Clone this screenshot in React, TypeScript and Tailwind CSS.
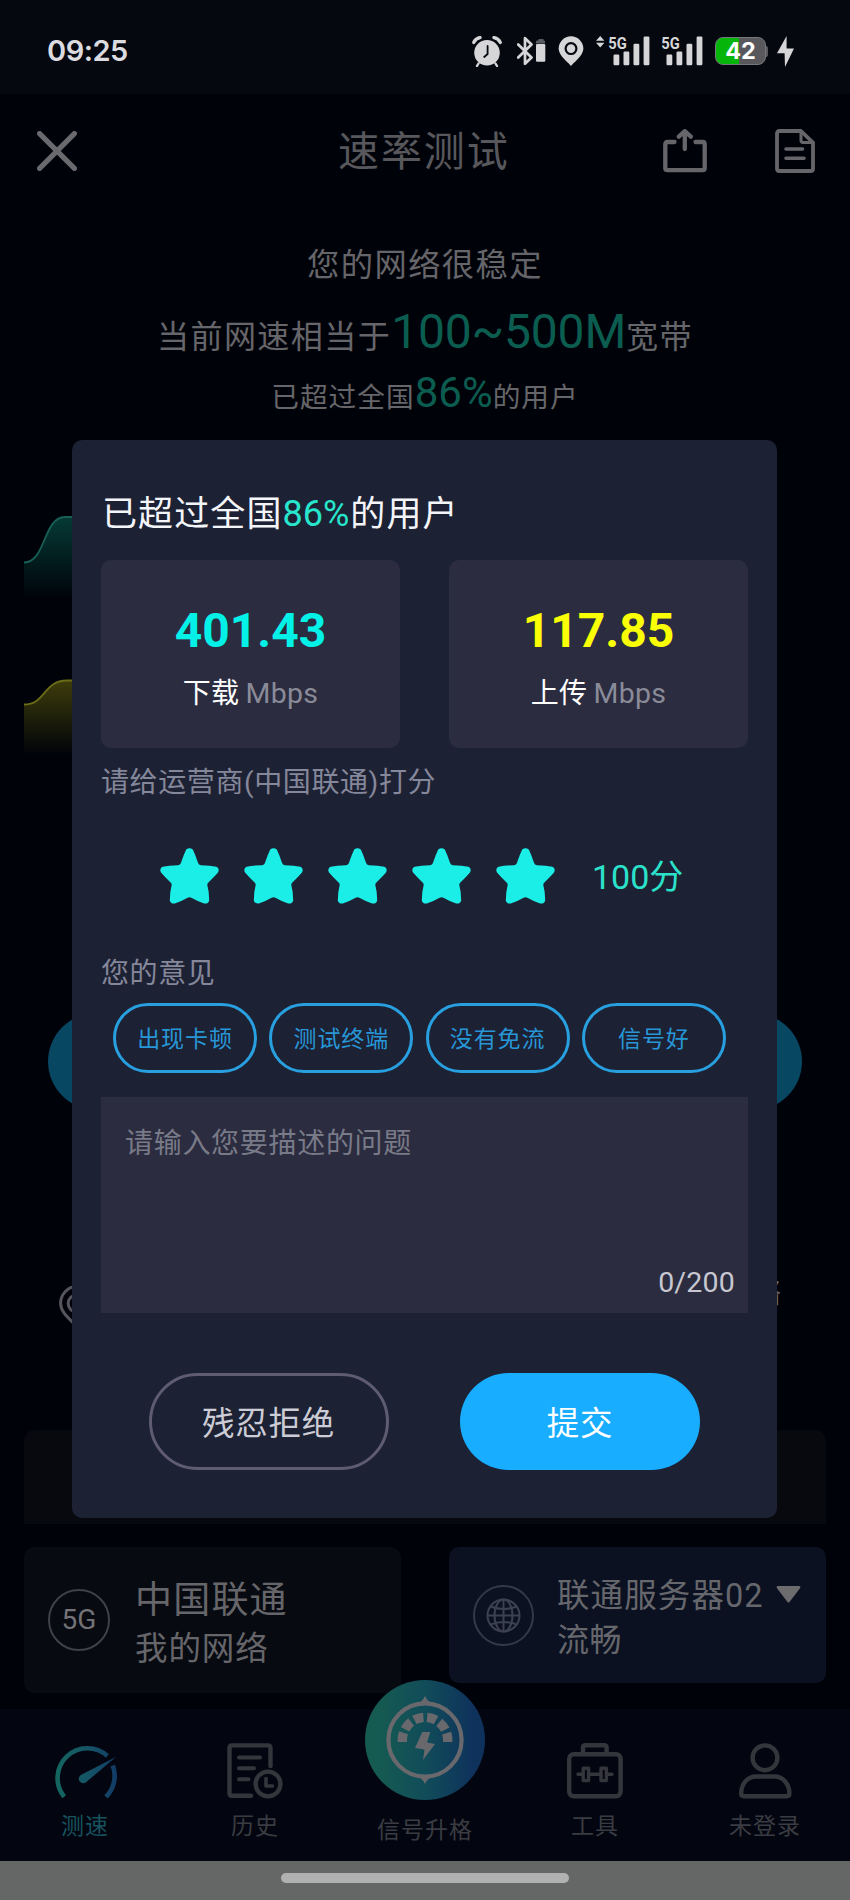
import type { ReactNode } from "react";

const chips = ["出现卡顿", "测试终端", "没有免流", "信号好"];

function AlarmIcon() {
  return (
    <svg className="h-[31px] w-[30px]" viewBox="0 0 30 31" fill="none">
      <circle cx="15" cy="16.8" r="12.8" fill="#d6d6d8" />
      <path d="M1.8 6.4C3 3.8 5 2.2 8 1.6M28.2 6.4C27 3.8 25 2.2 22 1.6" stroke="#d6d6d8" strokeWidth="3.4" strokeLinecap="round" />
      <path d="M6.5 27.5 5 30M23.5 27.5 25 30" stroke="#d6d6d8" strokeWidth="2.4" strokeLinecap="round" />
      <path d="M15.6 10v8l-3.4 3" stroke="#05080f" strokeWidth="1.8" strokeLinecap="round" />
    </svg>
  );
}

function BluetoothIcon() {
  return (
    <svg className="h-[30px] w-[29px]" viewBox="0 0 29 30" fill="none">
      <path d="M1.2 8.5 14.5 21.5 8 27.8V2.2L14.5 8.5 1.2 21.5" stroke="#d6d6d8" strokeWidth="2.7" strokeLinejoin="round" strokeLinecap="round" />
      <path d="M19 7.5V5.6a1 1 0 0 1 1-1h1.5V3h5v1.6H27a1 1 0 0 1 1 1v1.9z" fill="#5b5c62" />
      <rect x="19" y="8" width="9.3" height="17.8" rx="1.2" fill="#d6d6d8" />
    </svg>
  );
}

function PinStatusIcon() {
  return (
    <svg className="h-[30px] w-[26px]" viewBox="0 0 26 30" fill="none">
      <path d="M13 30C11 27 1 20.5 0.6 12.8A12.4 12.6 0 0 1 25.4 12.8C25 20.5 15 27 13 30Z" fill="#d6d6d8" />
      <circle cx="13" cy="12.6" r="5.4" stroke="#05080f" strokeWidth="2.2" />
    </svg>
  );
}

function SignalIcon({ arrows = false }: { arrows?: boolean }) {
  return (
    <svg className="h-[46px] w-[54px]" viewBox="0 -8 54 46" fill="#d6d6d8">
      {arrows && <path d="M0 4.7 4.2 0l4.2 4.7zM0 6.8l4.2 4.7 4.2-4.7z" />}
      <text x="12.2" y="12.6" fontSize="17" fontWeight="700" fontFamily="Roboto, sans-serif" textLength="18.5" lengthAdjust="spacingAndGlyphs">5G</text>
      <rect x="17.5" y="18.5" width="5.8" height="10.8" rx="1.2" />
      <rect x="27.5" y="15.5" width="5.8" height="13.8" rx="1.2" />
      <rect x="37.5" y="7.8" width="5.8" height="21.5" rx="1.2" />
      <rect x="47.6" y="0.6" width="5.8" height="28.7" rx="1.2" />
    </svg>
  );
}

function BatteryIcon() {
  return (
    <div className="flex items-center">
      <div className="flex h-7 w-[51px] items-center justify-center rounded-[8px] border border-[#77787b] bg-[linear-gradient(90deg,#06b50a_46%,#59595d_46%)] font-[Inter] text-[23.5px] leading-none font-bold text-white">
        42
      </div>
      <div className="h-[11px] w-[2px] rounded-r-full bg-[#59595d]" />
    </div>
  );
}

function CloseIcon() {
  return (
    <svg className="h-10 w-10" viewBox="0 0 40 40" stroke="#6a6a6e" strokeWidth="5.2" strokeLinecap="round">
      <path d="M2.6 2.6 37.4 37.4M37.4 2.6 2.6 37.4" />
    </svg>
  );
}

function ShareIcon() {
  return (
    <svg className="h-11 w-11" viewBox="0 0 44 44" fill="none" stroke="#66666a" strokeWidth="4.3" strokeLinecap="round" strokeLinejoin="round">
      <path d="M11.5 13H4.5Q2.3 13 2.3 15.2V39Q2.3 41.2 4.5 41.2H39.5Q41.7 41.2 41.7 39V15.2Q41.7 13 39.5 13H32.5" />
      <path d="M21.8 20V3.5M15.8 7.6 21.8 2.2 27.8 7.6" />
    </svg>
  );
}

function DocIcon() {
  return (
    <svg className="h-11 w-10" viewBox="0 0 40 44" fill="none" stroke="#66666a" strokeWidth="3.8" strokeLinecap="round" strokeLinejoin="round">
      <path d="M26 2H4.6Q2 2 2 4.6V39.4Q2 42 4.6 42H35.4Q38 42 38 39.4V13.6Z" />
      <path d="M26 2.5V11.5Q26 13.4 28 13.4H37" strokeWidth="3" />
      <path d="M11 20H27.5M11 29.2H29" strokeWidth="3.6" />
    </svg>
  );
}

function StarIcon() {
  return (
    <svg className="h-14 w-[59px]" viewBox="0 0 59 56" fill="#1beee6">
      <path d="M26.2 1.4Q29.5-1 32.8 1.4Q35.4 6.6 38 14.8Q38.6 17 41 17.2Q50 17.2 56.4 18.8Q60 20.4 58 24.6Q54 29.4 48.4 34.4Q47 35.6 47.4 37.6Q49.2 44 49.2 52.4Q48.4 56 44.2 55.4Q37 53.2 31.4 49.8Q29.5 48.8 27.6 49.8Q22 53.2 14.8 55.4Q10.6 56 9.8 52.4Q9.8 44 11.6 37.6Q12 35.6 10.6 34.4Q5 29.4 1 24.6Q-1 20.4 2.6 18.8Q9 17.2 18 17.2Q20.4 17 21 14.8Q23.6 6.6 26.2 1.4Z" />
    </svg>
  );
}

function GlobeIcon() {
  return (
    <svg className="h-[35px] w-[35px]" viewBox="0 0 35 35" fill="none" stroke="#3c4150" strokeWidth="2">
      <circle cx="17.5" cy="17.5" r="16" />
      <ellipse cx="17.5" cy="17.5" rx="9" ry="16" />
      <path d="M17.5 1.5v32M1.5 17.5h32M4.5 8.5Q17.5 13.5 30.5 8.5M4.5 26.5Q17.5 21.5 30.5 26.5" />
    </svg>
  );
}

function GaugeIcon() {
  return (
    <svg className="h-14 w-[66px]" viewBox="0 0 66 56" fill="none">
      <defs>
        <linearGradient id="gauge" x1="0" y1="0" x2="66" y2="0" gradientUnits="userSpaceOnUse">
          <stop offset="0" stopColor="#14685f" />
          <stop offset="0.55" stopColor="#155466" />
          <stop offset="1" stopColor="#123a66" />
        </linearGradient>
      </defs>
      <path d="M12.2 53.8A29.8 29.8 0 0 1 55.4 13M60.8 22.5A29.8 29.8 0 0 1 54 53.8" stroke="url(#gauge)" strokeWidth="4.6" />
      <path d="M64.2 13.8 29.8 31.4A4.6 4.6 0 1 0 35.2 38.3Z" fill="url(#gauge)" />
    </svg>
  );
}

function HistoryIcon() {
  return (
    <svg className="h-14 w-14" viewBox="0 0 56 56" fill="none" stroke="#34363c" strokeWidth="4.4" strokeLinecap="round" strokeLinejoin="round">
      <path d="M43.5 23V5Q43.5 2.4 41 2.4H5Q2.5 2.4 2.5 5V50Q2.5 52.8 5 52.8H24" />
      <path d="M12 14.5H33M12 25.2H27M12 36.2H21.5" strokeWidth="4" />
      <circle cx="41" cy="41" r="12.4" />
      <path d="M39 35.5V43H45.5" strokeWidth="3.6" />
    </svg>
  );
}

function BoostIcon() {
  return (
    <svg className="h-[120px] w-[120px]" viewBox="0 0 120 120" fill="none">
      <defs>
        <linearGradient id="boost" x1="0" y1="0" x2="120" y2="0" gradientUnits="userSpaceOnUse">
          <stop offset="0.1" stopColor="#155b51" />
          <stop offset="0.5" stopColor="#114c59" />
          <stop offset="0.9" stopColor="#0f325c" />
        </linearGradient>
      </defs>
      <circle cx="60" cy="60" r="60" fill="url(#boost)" />
      <circle cx="60" cy="60" r="36.6" stroke="#69696d" strokeWidth="4.2" />
      <path d="M53 23.5Q57 22 60 16Q63 22 67 23.5ZM53 96.5Q57 98 60 104Q63 98 67 96.5Z" fill="#69696d" />
      <path d="M37.3 62V60A22.7 22.7 0 0 1 82.7 60V62" stroke="#69696d" strokeWidth="9.4" strokeDasharray="9.4 3.78" />
      <path d="M57.3 52H65.3L62 62.5 70 64 58 80 59.5 69.5 50 68Z" fill="#69696d" />
    </svg>
  );
}

function ToolIcon() {
  return (
    <svg className="h-14 w-14" viewBox="0 0 56 56" fill="none" stroke="#34363c" strokeWidth="4.4" strokeLinecap="round" strokeLinejoin="round">
      <rect x="2.2" y="11.2" width="51.4" height="42" rx="4.5" />
      <path d="M16 10V4.5Q16 2.2 18.5 2.2H37Q39.6 2.2 39.6 4.5V10" />
      <path d="M11 31.3H15.5M23 31.3H33M40.5 31.3H45M16.2 25.2H21.6V37.6H16.2ZM34 25.2H39.4V37.6H34Z" strokeWidth="3.4" />
    </svg>
  );
}

function UserIcon() {
  return (
    <svg className="h-14 w-[53px]" viewBox="0 0 53 56" fill="none" stroke="#34363c" strokeWidth="4.4" strokeLinejoin="round">
      <circle cx="26" cy="14.8" r="12.4" />
      <path d="M17 33.5H35.5C44 33.5 50.4 41 50.4 50.5Q50.4 53.2 47.6 53.2H5Q2.2 53.2 2.2 50.5C2.2 41 8.5 33.5 17 33.5Z" />
    </svg>
  );
}

function Tab({ icon, label, active = false }: { icon: ReactNode; label: string; active?: boolean }) {
  return (
    <div className="flex w-[170px] flex-col items-center pt-[34px]">
      {icon}
      <div
        className={
          active
            ? "mt-3 text-[23px] leading-8 tracking-[1px] text-[#17525f]"
            : "mt-3 text-[23px] leading-8 tracking-[1px] text-[#3a3c42]"
        }
      >
        {label}
      </div>
    </div>
  );
}

function StatusBar() {
  return (
    <div className="flex h-[94px] items-start bg-[#05080f]">
      <div className="mt-[35px] ml-[47px] w-[425px] font-[Inter] text-[29px] leading-[31px] font-semibold tracking-[-0.5px] text-[#dcdce0]">09:25</div>
      <div className="mt-[35px] flex h-8 items-center">
        <AlarmIcon />
        <div className="ml-[15px] flex"><BluetoothIcon /></div>
        <div className="ml-3 flex"><PinStatusIcon /></div>
        <div className="ml-3 flex"><SignalIcon arrows /></div>
        <div className="-ml-px flex"><SignalIcon /></div>
        <div className="ml-3 flex"><BatteryIcon /></div>
        <svg className="ml-[9px] h-[31px] w-[17px]" viewBox="0 0 17 31" fill="#d6d6d8">
          <path d="M9.6 0 0 17.2H7.6L8 31 17 12.6H9.6Z" />
        </svg>
      </div>
    </div>
  );
}

function SpeedCard({ value, label, tone }: { value: string; label: string; tone: string }) {
  return (
    <div className="flex h-[188px] w-[299px] flex-col items-center rounded-[10px] bg-[#2b2c40] pt-[43px]">
      <div className={`text-[48px] leading-[56px] font-bold ${tone}`}>{value}</div>
      <div className="mt-[15px] flex items-baseline leading-10">
        <span className="text-[28px] tracking-[0.4px] text-white">{label}</span>
        <span className="ml-[6px] text-[28.5px] tracking-[0.3px] text-[#8a8b98]">Mbps</span>
      </div>
    </div>
  );
}

function RatingDialog() {
  return (
    <div className="absolute top-[440px] left-[72px] flex h-[1078px] w-[705px] flex-col rounded-[10px] bg-[#1d2134] pr-[29px] pl-[29px]">
      <div className="mt-[48px] flex h-[52px] items-baseline pl-px text-[35px] leading-[52px] tracking-[1.1px] text-[#f4f5f9]">
        <span>已超过全国</span>
        <span className="text-[36px] tracking-normal text-[#27e6cd]">86%</span>
        <span className="ml-px">的用户</span>
      </div>
      <div className="mt-5 flex justify-between">
        <SpeedCard value="401.43" label="下载" tone="text-[#04f1e8]" />
        <SpeedCard value="117.85" label="上传" tone="text-[#fbff05]" />
      </div>
      <div className="mt-[15px] text-[28px] leading-10 tracking-[0.6px] text-[#85879a]">请给运营商(中国联通)打分</div>
      <div className="mt-[45px] flex h-14 items-center gap-[25px] pl-[59px]">
        <StarIcon />
        <StarIcon />
        <StarIcon />
        <StarIcon />
        <StarIcon />
        <div className="ml-[12px] pt-[2px] text-[34px] leading-14 text-[#2be2cb]">100分</div>
      </div>
      <div className="mt-[50px] text-[28px] leading-10 tracking-[0.6px] text-[#85879a]">您的意见</div>
      <div className="mt-[9px] flex gap-[12.3px] pl-3">
        {chips.map((chip) => (
          <div
            key={chip}
            className="flex h-[70px] w-36 shrink-0 items-center justify-center rounded-full border-3 border-[#289fdf] pt-[3px] text-[23px] leading-none tracking-[0.9px] text-[#2796d6]"
          >
            {chip}
          </div>
        ))}
      </div>
      <div className="mt-6 flex h-[216px] flex-col justify-between bg-[#2b2c40] pt-[27px] pr-[13px] pb-[10px] pl-[24px]">
        <div className="text-[28px] leading-10 tracking-[0.7px] text-[#797a87]">请输入您要描述的问题</div>
        <div className="self-end text-[28.5px] leading-10 tracking-[0.2px] text-[#c6c7d0]">0/200</div>
      </div>
      <div className="mt-[60px] flex justify-between pr-[48px] pl-12">
        <div className="flex h-[97px] w-60 items-center justify-center rounded-full border-3 border-[#5f5c72] pt-[5px] pr-px text-[32.5px] leading-none tracking-[0.7px] text-[#cbccd5]">
          残忍拒绝
        </div>
        <div className="flex h-[97px] w-60 items-center justify-center rounded-full bg-[#18adff] pt-[5px] text-[32.5px] leading-none tracking-[0.7px] text-white">
          提交
        </div>
      </div>
    </div>
  );
}

export default function App() {
  return (
    <div className="relative flex h-[1900px] w-[850px] flex-col overflow-hidden bg-[#000209] font-[Roboto,'Noto_Sans_CJK_SC',sans-serif]">
      <StatusBar />
      <div className="flex h-[114px] items-center pr-[35px] pl-[37px]">
        <CloseIcon />
        <div className="ml-[261px] w-[325px] pt-[2px] text-[41px] leading-none tracking-[1.9px] text-[#58585c]">速率测试</div>
        <ShareIcon />
        <div className="ml-[68px] flex"><DocIcon /></div>
      </div>
      <div className="mt-[27px] text-center text-[32.3px] leading-[60px] tracking-[1.4px] text-[#66666a]">您的网络很稳定</div>
      <div className="mt-[12px] h-[60px] text-center text-[32.1px] leading-[60px] tracking-[1.4px] text-[#66666a]">
        当前网速相当于<span className="text-[48px] leading-none tracking-[-0.2px] text-[#0b5d50]">100~500M</span>宽带
      </div>
      <div className="mt-px h-[60px] text-center text-[27.7px] leading-[60px] tracking-[1px] text-[#66666a]">
        已超过全国<span className="text-[42px] leading-none tracking-normal text-[#0b5d50]">86%</span>的用户
      </div>

      <svg className="mt-[72px] ml-6 h-[110px] w-[120px] shrink-0" viewBox="0 0 120 110" fill="none">
        <defs>
          <linearGradient id="down" x1="0" y1="16" x2="0" y2="100" gradientUnits="userSpaceOnUse">
            <stop offset="0" stopColor="#053a35" />
            <stop offset="1" stopColor="#000209" />
          </linearGradient>
        </defs>
        <path d="M0 62.5C22 62.5 19 17 41 17H120V104H0Z" fill="url(#down)" />
        <path d="M0 62.5C22 62.5 19 17 41 17H120" stroke="#175f57" strokeWidth="1.8" />
      </svg>
      <svg className="mt-[50px] ml-6 h-[100px] w-[120px] shrink-0" viewBox="0 0 120 100" fill="none">
        <defs>
          <linearGradient id="up" x1="0" y1="20" x2="0" y2="95" gradientUnits="userSpaceOnUse">
            <stop offset="0" stopColor="#3d3d0b" />
            <stop offset="1" stopColor="#000209" />
          </linearGradient>
        </defs>
        <path d="M0 44.5C22 44.5 19 20.5 43 20.5H120V98H0Z" fill="url(#up)" />
        <path d="M0 44.5C22 44.5 19 20.5 43 20.5H120" stroke="#6b6c17" strokeWidth="1.8" />
      </svg>

      <div className="mx-12 mt-[253px] h-[97px] shrink-0 rounded-full bg-[#074762]" />

      <div className="mt-[165px] flex h-14 shrink-0 items-start justify-between pr-[69px] pl-[59px]">
        <svg className="mt-[10px] h-[44px] w-9" viewBox="0 0 36 44" fill="none" stroke="#55555a" strokeWidth="3">
          <path d="M18 42C14 36 1.6 29 1.6 18.2A16.4 16.6 0 0 1 34.4 18.2C34.4 29 22 36 18 42Z" />
          <circle cx="18" cy="18.5" r="8.8" />
        </svg>
        <div className="pt-[2px] text-[28px] leading-[34px] text-[#66666a]">络</div>
      </div>

      <div className="mx-6 mt-[99px] h-[94px] shrink-0 rounded-t-[10px] bg-[#07090e]" />

      <div className="mt-[23px] flex h-[162px] shrink-0 items-start justify-between px-6">
        <div className="flex h-[146px] w-[377px] items-center rounded-[10px] bg-[#070a11] pl-6">
          <div className="flex h-[62px] w-[62px] items-center justify-center rounded-full border-2 border-[#404148] text-[28px] leading-none text-[#737377]">5G</div>
          <div className="ml-[25px] flex flex-col pt-[6px]">
            <div className="text-[37px] leading-[52px] tracking-[1.2px] text-[#66666a]">中国联通</div>
            <div className="text-[32.5px] leading-[44px] tracking-[0.9px] text-[#66666a]">我的网络</div>
          </div>
        </div>
        <div className="flex h-[136px] w-[377px] items-center rounded-[10px] bg-[#0b1120] pl-6">
          <div className="flex h-[61px] w-[61px] shrink-0 items-center justify-center rounded-full border-2 border-[#343947]">
            <GlobeIcon />
          </div>
          <div className="ml-[23px] flex flex-col pt-[6px]">
            <div className="flex items-center text-[32.5px] leading-[44px] tracking-[1.1px] text-[#66676d]">
              联通服务器02
              <svg className="ml-[12px] -mt-1 h-[17px] w-[25px]" viewBox="0 0 25 17" fill="#6c6c6e">
                <path d="M1.5 0H23.5Q25 0.6 24.2 2L13.5 16Q12.5 17 11.5 16L0.8 2Q0 0.6 1.5 0Z" />
              </svg>
            </div>
            <div className="text-[32px] leading-[44px] tracking-[0.6px] text-[#66676d]">流畅</div>
          </div>
        </div>
      </div>

      <div className="flex h-[152px] shrink-0 bg-[#030610]">
        <Tab icon={<GaugeIcon />} label="测速" active />
        <Tab icon={<HistoryIcon />} label="历史" />
        <div className="-mt-[29px] flex w-[170px] flex-col items-center">
          <BoostIcon />
          <div className="mt-[15px] text-[23px] leading-8 tracking-[1px] text-[#3a3c42]">信号升格</div>
        </div>
        <Tab icon={<ToolIcon />} label="工具" />
        <Tab icon={<UserIcon />} label="未登录" />
      </div>
      <div className="flex h-[39px] shrink-0 justify-center bg-[#656666] pt-3">
        <div className="h-[10px] w-72 rounded-full bg-[#b1b1b1]" />
      </div>

      <RatingDialog />
    </div>
  );
}
